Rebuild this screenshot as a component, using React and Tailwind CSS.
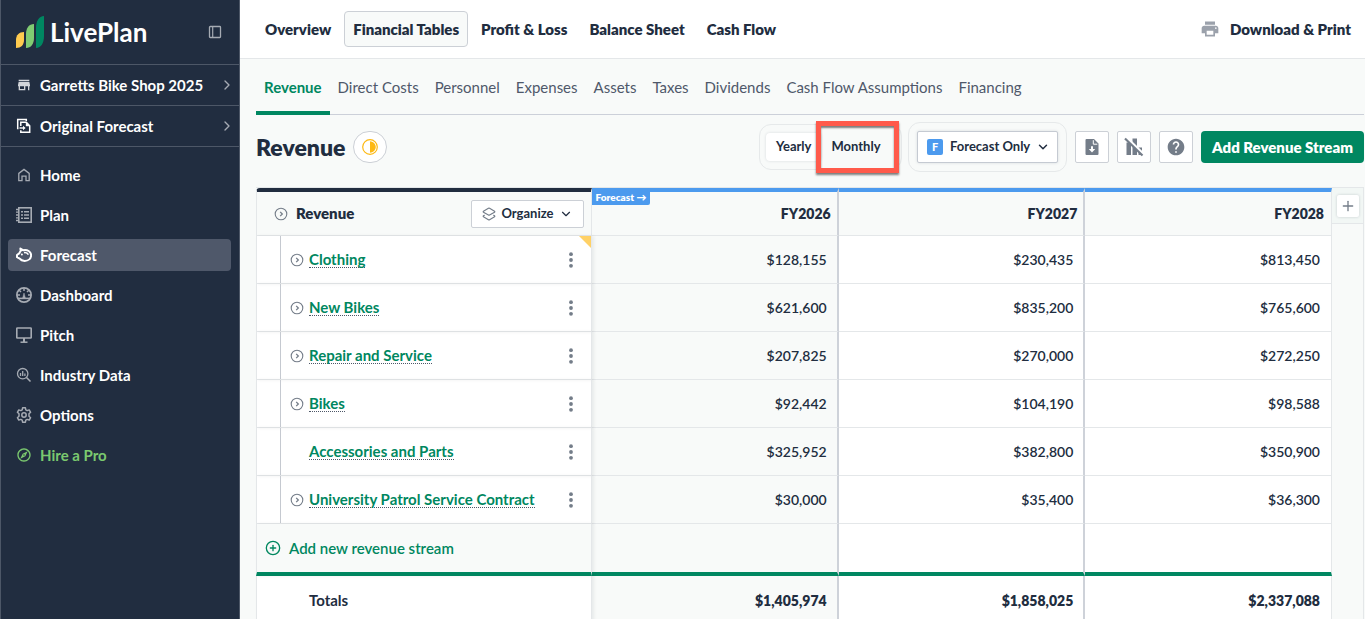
import { useState } from 'react';
import { ChevronDown, ChevronRight, CirclePlus, Layers2, Plus } from 'lucide-react';
import { MdHelp, MdOutlineExplore, MdPrint, MdStore } from 'react-icons/md';
import clsx from 'clsx';

const HomeIcon = () => (
  <svg viewBox="0 0 16 16" className="size-4" fill="none" stroke="currentColor" strokeWidth="1.3" aria-hidden="true">
    <path d="M2.8 13.6V6.4L8 2.4l5.2 4v7.2H10V9.2H6v4.4z" />
  </svg>
);

const PlanIcon = () => (
  <svg viewBox="0 0 16 16" className="size-4" fill="none" stroke="currentColor" aria-hidden="true">
    <rect x="2.8" y="0.8" width="12.4" height="14.4" strokeWidth="1.6" />
    <path d="M0 2.5h3M0 5.2h3M0 8h3M0 10.8h3M0 13.5h3" strokeWidth="1.3" />
    <path d="M5 4.8h2M8 4.8h5M5 8h2M8 8h5M5 11.2h2M8 11.2h5" strokeWidth="1.6" />
  </svg>
);

const PiggyIcon = () => (
  <svg viewBox="0 0 16 16" className="size-4" fill="none" stroke="currentColor" strokeLinejoin="round" aria-hidden="true">
    <path
      d="M4.4 1.6 7 3.2c4.4-1 8.1 1.4 8.1 5 0 3.4-2.9 5.7-6.400 5.700-2.200 0-4-.8-5-2.200L1 10.200V8l2.500-1.900c.2-.9.6-1.500 1.200-2z"
      strokeWidth="2"
    />
    <path d="M8 5.600c2-.4 3.600.4 4.400 2" strokeWidth="1.600" />
    <circle cx="5.900" cy="7.500" r="1" fill="currentColor" stroke="none" />
  </svg>
);

const GaugeIcon = () => (
  <svg viewBox="0 0 16 16" className="size-4" fill="none" stroke="currentColor" aria-hidden="true">
    <circle cx="8" cy="8" r="7.1" strokeWidth="1.800" />
    <path d="M1.500 11.400h13" strokeWidth="1.600" />
    <path d="M8 1v3M3.200 3.200 5 5M12.800 3.200 11 5M1 8h3M12 8h3" strokeWidth="1.500" />
    <path d="M6.600 11.200 8 6l1.400 5.200z" fill="currentColor" stroke="currentColor" strokeWidth="0.500" />
  </svg>
);

const PitchIcon = () => (
  <svg viewBox="0 0 16 16" className="size-4" fill="none" stroke="currentColor" aria-hidden="true">
    <rect x="0.8" y="1" width="14.4" height="10" rx="0.6" strokeWidth="1.6" />
    <path d="M8 11v4" strokeWidth="2" />
    <path d="M4.500 15.200h7" strokeWidth="1.500" />
  </svg>
);

const IndustryIcon = () => (
  <svg viewBox="0 0 16 16" className="size-4" fill="none" stroke="currentColor" aria-hidden="true">
    <circle cx="6.700" cy="6.700" r="5.200" strokeWidth="1.300" />
    <path d="m10.500 10.500 4 4" strokeWidth="1.600" />
    <path d="M4.500 6v3M6.700 4v5M8.900 6.500V9" strokeWidth="1.300" />
  </svg>
);

const GearIcon = () => (
  <svg viewBox="0 0 16 16" className="size-4" fill="none" stroke="currentColor" strokeWidth="1.5" strokeLinejoin="round" aria-hidden="true">
    <path d="M6.600.8h2.800l.4 2 1.400.8 2-.7 1.400 2.400L13 6.700v2.600l1.600 1.400-1.400 2.400-2-.7-1.400.8-.4 2H6.600l-.4-2-1.400-.8-2 .7-1.400-2.400L3 9.300V6.700L1.400 5.300l1.400-2.400 2 .7 1.400-.8z" />
    <circle cx="8" cy="8" r="2.200" />
  </svg>
);

const ScenarioIcon = () => (
  <svg viewBox="0 0 16 16" className="size-4" fill="none" stroke="currentColor" aria-hidden="true">
    <path d="M2.500 10.500H1.700V1.500h8.600V3" strokeWidth="1.500" />
    <path d="M4.800 8V4.300h5.500l3.400 3.400v6.500H4.800v-2" strokeWidth="1.500" />
    <path d="M9.800 4v4.200H14z" fill="currentColor" stroke="none" />
    <path d="M3.500 10h4" strokeWidth="1.400" />
    <path d="M7 7.800 9.600 10 7 12.200z" fill="currentColor" stroke="none" />
  </svg>
);

const PanelIcon = () => (
  <svg viewBox="0 0 14 14" className="size-3.5" fill="none" stroke="currentColor" aria-hidden="true">
    <rect x="1.500" y="1.500" width="11" height="11" rx="0.800" strokeWidth="1.300" />
    <path d="M4.700 1.500v11" strokeWidth="1.200" />
  </svg>
);

const ExpandIcon = () => (
  <svg viewBox="0 0 14 14" className="size-3.5 shrink-0" fill="none" stroke="currentColor" aria-hidden="true">
    <circle cx="7" cy="7" r="5.800" strokeWidth="1.100" />
    <path d="m6.200 4.900 2.100 2.100-2.100 2.100" strokeWidth="1.300" />
  </svg>
);

const DotsIcon = () => (
  <svg viewBox="0 0 4 16" className="h-4 w-1" fill="currentColor" aria-hidden="true">
    <circle cx="2" cy="2.200" r="1.900" />
    <circle cx="2" cy="8" r="1.900" />
    <circle cx="2" cy="13.800" r="1.900" />
  </svg>
);

const ExportIcon = () => (
  <svg viewBox="0 0 16 16" className="size-4" aria-hidden="true">
    <path d="M2.500 0H10l4.500 4.500V15a1 1 0 0 1-1 1h-11a1 1 0 0 1-1-1V1a1 1 0 0 1 1-1z" fill="currentColor" />
    <path d="M9.300 1.200v4h4" fill="none" stroke="white" strokeWidth="1" />
    <path d="M8 7.200v4" fill="none" stroke="white" strokeWidth="2" />
    <path d="M4.800 10h6.400L8 13.400z" fill="white" />
  </svg>
);

const ChartOffIcon = () => (
  <svg viewBox="0 0 20 20" className="size-5" aria-hidden="true">
    <path d="M2.500 5.500H7V18H2.500zM8.500 1.500H13V18H8.500zM14.500 10.500H18V18h-3.500z" fill="currentColor" />
    <path d="M2 0 20 17.500" stroke="white" strokeWidth="2.500" />
    <path d="M1 1.500 18.500 18.500" stroke="currentColor" strokeWidth="2.200" />
  </svg>
);

const HalfCircleIcon = () => (
  <svg viewBox="0 0 16 16" className="size-4" fill="none" stroke="#fdb913" aria-hidden="true">
    <circle cx="8" cy="8" r="7.300" strokeWidth="1.200" />
    <path d="M8 2.200a5.800 5.800 0 0 1 0 11.600z" fill="#fdb913" stroke="none" />
  </svg>
);

const navItems = [
  { icon: HomeIcon, label: 'Home' },
  { icon: PlanIcon, label: 'Plan' },
  { icon: PiggyIcon, label: 'Forecast' },
  { icon: GaugeIcon, label: 'Dashboard' },
  { icon: PitchIcon, label: 'Pitch' },
  { icon: IndustryIcon, label: 'Industry Data' },
  { icon: GearIcon, label: 'Options' },
  { icon: MdOutlineExplore, label: 'Hire a Pro', accent: true },
];

const sections = ['Overview', 'Financial Tables', 'Profit & Loss', 'Balance Sheet', 'Cash Flow'];

const tables = [
  'Revenue',
  'Direct Costs',
  'Personnel',
  'Expenses',
  'Assets',
  'Taxes',
  'Dividends',
  'Cash Flow Assumptions',
  'Financing',
];

const years = ['FY2026', 'FY2027', 'FY2028'];

const streams = [
  { name: 'Clothing', values: ['$128,155', '$230,435', '$813,450'], expandable: true, flagged: true },
  { name: 'New Bikes', values: ['$621,600', '$835,200', '$765,600'], expandable: true },
  { name: 'Repair and Service', values: ['$207,825', '$270,000', '$272,250'], expandable: true },
  { name: 'Bikes', values: ['$92,442', '$104,190', '$98,588'], expandable: true },
  { name: 'Accessories and Parts', values: ['$325,952', '$382,800', '$350,900'] },
  { name: 'University Patrol Service Contract', values: ['$30,000', '$35,400', '$36,300'], expandable: true },
];

const totals = ['$1,405,974', '$1,858,025', '$2,337,088'];

function Sidebar() {
  return (
    <aside className="flex w-60 shrink-0 flex-col border-x border-[#4d5767] bg-[#212d40] text-[15px] font-bold text-white">
      <div className="flex h-16 items-center justify-between pr-[17px] pl-[15px]">
        <a href="#home" className="flex items-center gap-1.5">
          <svg viewBox="0 0 28 32" className="h-8 w-7" aria-hidden="true">
            <path d="M0 32v-8c0-5 3-8 8-8v8c0 5-3 8-8 8z" fill="#ffcb4f" />
            <path d="M10 32V18c0-6 3-10 8-10v14c0 6-3 10-8 10z" fill="#80cc72" />
            <path d="M20 32V12c0-7 3-12 8-12v20c0 7-3 12-8 12z" fill="#008761" />
          </svg>
          <span className="text-[26px] leading-8">LivePlan</span>
        </a>
        <button type="button" aria-label="Collapse sidebar" className="text-[#a6abb3]">
          <PanelIcon />
        </button>
      </div>
      <button type="button" className="flex h-[41px] items-center border-t border-[#4d5767] pr-1 pl-[15px]">
        <MdStore className="size-4 text-[#d2d5d9]" />
        <span className="ml-2 flex-1 text-left">Garretts Bike Shop 2025</span>
        <ChevronRight className="size-4 text-[#a6abb3]" />
      </button>
      <button type="button" className="flex h-[42px] items-center border-y border-[#4d5767] pr-1 pl-[15px]">
        <ScenarioIcon />
        <span className="ml-2 flex-1 text-left">Original Forecast</span>
        <ChevronRight className="size-4 text-[#a6abb3]" />
      </button>
      <nav className="flex flex-col gap-2 py-3 pr-2 pl-[7px]">
        {navItems.map((item) => {
          const active = item.label === 'Forecast';
          return (
            <a
              key={item.label}
              href="#nav"
              className={clsx(
                'flex h-8 items-center gap-2 rounded px-2',
                active && 'bg-[#4f586a]',
                item.accent && 'text-[#7bc96f]'
              )}
            >
              <span className={clsx(!active && !item.accent && 'text-[#a6abb3]')}>
                <item.icon className="size-4" />
              </span>
              {item.label}
            </a>
          );
        })}
      </nav>
    </aside>
  );
}

function TopBar() {
  return (
    <header className="flex h-[59px] shrink-0 items-center justify-between border-b border-[#e4e7e9] bg-white pr-3.5 pl-4 text-[15px] font-extrabold">
      <nav className="flex gap-1">
        {sections.map((label) => (
          <a
            key={label}
            href="#section"
            className={clsx(
              'flex h-9 items-center rounded border px-2',
              label === 'Financial Tables' ? 'border-[#ccd0d6] bg-[#f8faf9]' : 'border-transparent'
            )}
          >
            {label}
          </a>
        ))}
      </nav>
      <button type="button" className="flex items-center gap-2.5">
        <MdPrint className="size-5 text-[#9ba1ab]" />
        Download &amp; Print
      </button>
    </header>
  );
}

function Toolbar() {
  const [period, setPeriod] = useState('Yearly');

  return (
    <div className="mb-2 flex h-16 items-center">
      <h1 className="text-[23px] font-extrabold">Revenue</h1>
      <button
        type="button"
        aria-label="Forecast progress"
        className="ml-2 flex h-8 w-[34px] items-center justify-center rounded-full border border-[#ccd0d6] bg-white"
      >
        <HalfCircleIcon />
      </button>

      <div className="relative ml-auto flex h-[46px] w-[143px] items-center rounded-xl border border-[#e6e9ea] pl-1.5 text-[13px] font-bold">
        {['Yearly', 'Monthly'].map((label) => (
          <button
            key={label}
            type="button"
            aria-pressed={period === label}
            onClick={() => setPeriod(label)}
            className={clsx(
              'h-7 rounded px-2.5',
              period === label && 'bg-white shadow-[0_0_3px_rgba(33,45,64,0.15)]'
            )}
          >
            {label}
          </button>
        ))}
        {/* highlight frame */}
        <div className="pointer-events-none absolute -top-1 right-0.5 h-[52px] w-[83px] border-5 border-[#ff5a4b] shadow-[0_2px_2px_rgba(0,0,0,0.5),inset_0_2px_2px_rgba(0,0,0,0.5)]" />
      </div>

      <div className="ml-1.5 flex h-[50px] items-center rounded-xl border border-[#e6e9ea] px-2">
        <label className="relative flex items-center">
          <span className="absolute left-2.5 flex size-4 items-center justify-center rounded-xs bg-[#4c9aee] text-[11px] font-black text-white">
            F
          </span>
          <select
            aria-label="Data shown"
            className="h-8 w-[141px] appearance-none rounded-xs border border-[#c5cad2] bg-white pr-6 pl-8 text-[13px] font-bold shadow-[0_0_3px_rgba(33,45,64,0.15)]"
          >
            <option>Forecast Only</option>
            <option>Forecast &amp; Actuals</option>
          </select>
          <ChevronDown className="pointer-events-none absolute right-2 size-3.5" strokeWidth={2.5} />
        </label>
      </div>

      <div className="ml-2 flex gap-2 text-[#747d89]">
        <button type="button" aria-label="Export" className="flex h-8 w-[34px] items-center justify-center rounded-xs border border-[#ccd0d6] bg-white">
          <ExportIcon />
        </button>
        <button type="button" aria-label="Hide chart" className="flex h-8 w-[34px] items-center justify-center rounded-xs border border-[#ccd0d6] bg-white">
          <ChartOffIcon />
        </button>
        <button type="button" aria-label="Help" className="flex h-8 w-[34px] items-center justify-center rounded-xs border border-[#ccd0d6] bg-white">
          <MdHelp className="size-5" />
        </button>
        <button type="button" className="h-8 w-[163px] rounded bg-[#008761] text-[15px] font-extrabold text-white">
          Add Revenue Stream
        </button>
      </div>
    </div>
  );
}

function RevenueTable() {
  // the first year is tinted, and the last one has no heavy divider
  const yearCell = (index) =>
    clsx(
      'text-right text-[14px]',
      index < 2 ? 'border-r-2 border-r-[#ced2d9] pr-2.5' : 'border-r border-r-[#e4e7e9] pr-[11px]'
    );

  return (
    <table className="flex-1 table-fixed border-separate border-spacing-0 text-[15px]">
      <colgroup>
        <col className="w-[336px]" />
        <col />
        <col />
        <col />
      </colgroup>
      <thead>
        <tr className="h-12 bg-[#f8faf9]">
          <th className="rounded-tl border-t-4 border-r border-b border-l border-t-[#212d40] border-r-[#e4e7e9] border-b-[#e4e7e9] border-l-[#e4e7e9] p-0">
            <div className="flex items-center pr-[7px] pl-[17px]">
              <button type="button" aria-label="Expand all" className="text-[#747d89]">
                <ExpandIcon />
              </button>
              <span className="ml-2 flex-1 text-left font-extrabold">Revenue</span>
              <button
                type="button"
                aria-haspopup="menu"
                className="flex h-7 w-[113px] items-center rounded-xs border border-[#ccd0d6] bg-white px-2.5 text-[13px] font-bold"
              >
                <Layers2 className="size-3.5 text-[#747d89]" />
                <span className="flex-1">Organize</span>
                <ChevronDown className="size-3.5" />
              </button>
            </div>
          </th>
          {years.map((year, index) => (
            <th
              key={year}
              className={clsx(
                'relative border-t-4 border-b border-t-[#4c9aee] border-b-[#e4e7e9] text-right text-[14px] font-extrabold',
                index < 2 ? 'border-r-2 border-r-[#ced2d9] pr-1.5' : 'border-r border-r-[#e4e7e9] pr-[7px]'
              )}
            >
              {index === 0 && (
                <span className="absolute -top-px left-0 h-3.5 w-[58px] rounded-br-xs bg-[#4c9aee] text-center text-[10px] leading-3 text-white">
                  Forecast →
                </span>
              )}
              {year}
            </th>
          ))}
        </tr>
      </thead>
      <tbody className="font-semibold">
        {streams.map((stream) => (
          <tr key={stream.name} className="h-12 bg-white">
            <th className="relative border-x border-b border-[#e4e7e9] p-0 font-bold shadow-[2px_0_3px_rgba(33,45,64,0.08)]">
              <div className="ml-[23px] flex h-[47px] items-center border-l border-[#c5c9d0] pr-[18px] pl-[9px]">
                <span className="w-[19px] text-[#747d89]">
                  {stream.expandable && (
                    <button type="button" aria-label={`Expand ${stream.name}`} className="block">
                      <ExpandIcon />
                    </button>
                  )}
                </span>
                <a href="#stream" className="border-b border-dotted border-[#4d5767] leading-4 text-[#00875f]">
                  {stream.name}
                </a>
                <button type="button" aria-label={`${stream.name} actions`} className="ml-auto text-[#747d89]">
                  <DotsIcon />
                </button>
              </div>
              {stream.flagged && (
                <span className="absolute top-0 right-0 size-3 bg-[#ffd166] [clip-path:polygon(0_0,100%_0,100%_100%)]" />
              )}
            </th>
            {stream.values.map((value, index) => (
              <td key={index} className={clsx('border-b border-b-[#e4e7e9]', index === 0 && 'bg-[#f8faf9]', yearCell(index))}>
                {value}
              </td>
            ))}
          </tr>
        ))}
        <tr className="h-[52px] bg-white">
          <th className="relative border-x border-b-4 border-x-[#e4e7e9] border-b-[#008761] bg-[#f8faf9] p-0 shadow-[2px_0_3px_rgba(33,45,64,0.08)]">
            <button type="button" className="flex items-center gap-2 pl-2 font-semibold text-[#00875f]">
              <CirclePlus className="size-4" />
              Add new revenue stream
            </button>
          </th>
          {years.map((year, index) => (
            <td key={year} className={clsx('border-b-4 border-b-[#008761]', index === 0 && 'bg-[#f8faf9]', yearCell(index))} />
          ))}
        </tr>
        <tr className="h-12 bg-white font-extrabold">
          <th className="relative border-x border-[#e4e7e9] p-0 pl-[52px] text-left shadow-[2px_0_3px_rgba(33,45,64,0.08)]">Totals</th>
          {totals.map((total, index) => (
            <td key={total} className={clsx(index === 0 && 'bg-[#f8faf9]', yearCell(index))}>
              {total}
            </td>
          ))}
        </tr>
      </tbody>
    </table>
  );
}

export default function App() {
  return (
    <div className="flex h-screen overflow-hidden bg-[#f8faf9] font-['Lato',sans-serif] text-[#212d40]">
      <Sidebar />
      <main className="flex min-w-0 flex-1 flex-col">
        <TopBar />
        <div className="pr-px pl-4">
          <nav className="flex h-14 border-b border-[#ccd0d9] text-[15px] text-[#4f586a]">
            {tables.map((label) => (
              <a
                key={label}
                href="#table"
                className={clsx(
                  'flex h-14 items-center border-b-4 px-2 pt-1',
                  label === 'Revenue' ? 'border-[#008761] font-bold text-[#00875f]' : 'border-transparent font-normal'
                )}
              >
                {label}
              </a>
            ))}
          </nav>
          <Toolbar />
          <div className="flex items-start border-t border-[#e4e7e9]">
            <RevenueTable />
            <div className="h-[480px] w-8 shrink-0 border-r border-[#e4e7e9]">
              <div className="flex h-9 items-center justify-center border-b border-[#e4e7e9] bg-[#f2f7f5]">
                <button
                  type="button"
                  aria-label="Add column"
                  className="flex size-[22px] items-center justify-center rounded-xs bg-white text-[#747d89] shadow-[0_0_3px_rgba(33,45,64,0.2)]"
                >
                  <Plus className="size-4" />
                </button>
              </div>
            </div>
          </div>
        </div>
      </main>
    </div>
  );
}
